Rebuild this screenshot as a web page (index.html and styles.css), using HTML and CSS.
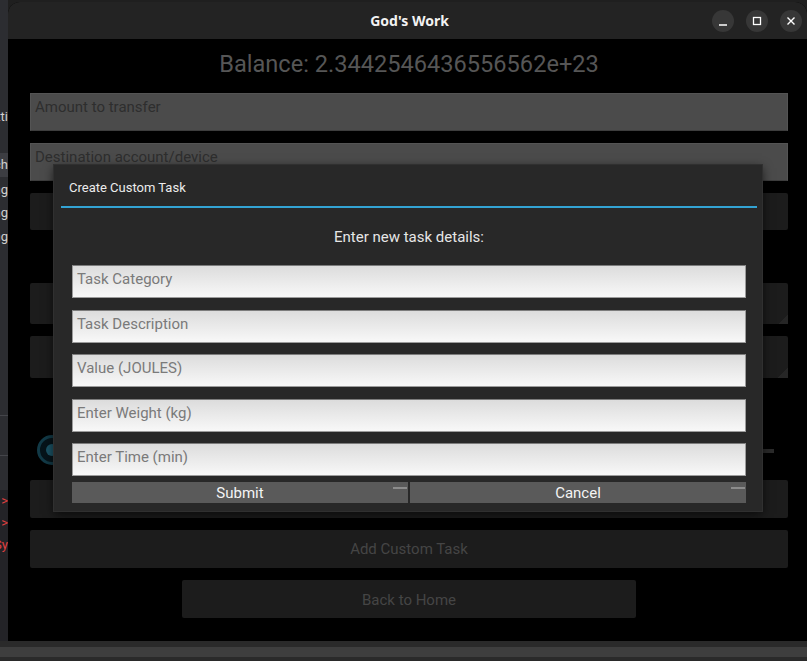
FILE: index.html
```html
<!DOCTYPE html>
<html lang="en">
<head>
	<meta charset="UTF-8">
	<title>God's Work</title>

	<link rel="stylesheet" href="styles.css">
</head>
<body>

	<!-- the app behind the window, only its right edge shows -->
	<div class="side">
		<div class="side-row r1"><span class="orange">t</span>ti</div>
		<div class="side-row r2">Search</div>
		<div class="side-row r3">String</div>
		<div class="side-row r4">String</div>
		<div class="side-row r5">String</div>
		<div class="side-sep s1"></div>
		<div class="side-sep s2"></div>
		<div class="side-low">
			<div class="side-row red">&gt;</div>
			<div class="side-row red">&gt;</div>
			<div class="side-row red">(Sy</div>
		</div>
	</div>

	<div class="window">
		<div class="titlebar">
			<div></div>
			<div class="title">God's Work</div>
			<div class="wbtns">
				<span class="wbtn">
					<svg width="22" height="22" viewBox="0 0 22 22"><path d="M7 15h8" stroke="#fff" stroke-width="1.5"/></svg>
				</span>
				<span class="wbtn">
					<svg width="22" height="22" viewBox="0 0 22 22"><rect x="7.5" y="7.5" width="7" height="7" fill="none" stroke="#fff" stroke-width="1.3"/></svg>
				</span>
				<span class="wbtn">
					<svg width="22" height="22" viewBox="0 0 22 22"><path d="M7.5 7.5l7 7M14.5 7.5l-7 7" stroke="#fff" stroke-width="1.4"/></svg>
				</span>
			</div>
		</div>

		<div class="content">
			<div class="balance">Balance: 2.3442546436556562e+23</div>
			<div class="field">Amount to transfer</div>
			<div class="field">Destination account/device</div>
			<div class="btn b1">Transfer</div>
			<div class="lbl"></div>
			<div class="btn b2 corner">Start Task</div>
			<div class="btn b3 corner">Stop Task</div>
			<div class="radio-row">
				<span class="radio"><span class="dot"></span></span>
				<span class="slider"></span>
			</div>
			<div class="btn">Submit Task</div>
			<div class="btn">Add Custom Task</div>
			<div class="btn home">Back to Home</div>
		</div>

		<!-- popup -->
		<div class="dialog">
			<div class="dlg-title">Create Custom Task</div>
			<div class="dlg-body">
				<div class="dlg-label">Enter new task details:</div>
				<div class="tinput">Task Category</div>
				<div class="tinput">Task Description</div>
				<div class="tinput">Value (JOULES)</div>
				<div class="tinput">Enter Weight (kg)</div>
				<div class="tinput">Enter Time (min)</div>
				<div class="dlg-btns">
					<div class="dbtn">Submit</div>
					<div class="dbtn">Cancel</div>
				</div>
			</div>
		</div>
	</div>

	<div class="bottom"></div>

</body>
</html>
```

FILE: styles.css
```css
*{
	margin: 0;
	padding: 0;
	box-sizing: border-box;
}

body{
	width: 807px;
	height: 661px;
	overflow: hidden;
	position: relative;
	background: #1f1f1f;
	font-family: Roboto, "Liberation Sans", sans-serif;
}

/* app behind */
.side{
	position: absolute;
	left: 0;
	top: 0;
	width: 8px;
	height: 661px;
	overflow: hidden;
	background: #2c2d31;
	font-size: 13px;
	color: #d0d0d0;
}

.side-row{
	position: absolute;
	right: 0;
	height: 22px;
	line-height: 22px;
	white-space: nowrap;
}

.side-row.r1{ top: 106px; }
.side-row.r2{ top: 153px; height: 24px; line-height: 24px; background: #3c3d42; padding-left: 40px; }
.side-row.r3{ top: 179px; }
.side-row.r4{ top: 202px; }
.side-row.r5{ top: 226px; }

.orange{
	color: #e0a060;
}

.side-sep{
	position: absolute;
	left: 0;
	width: 8px;
	height: 1px;
	background: #44454a;
}

.side-sep.s1{ top: 415px; }
.side-sep.s2{ top: 455px; }

.side-low{
	position: absolute;
	left: 0;
	top: 490px;
	width: 8px;
	height: 160px;
	background: #232327;
}

.side-low .side-row{
	position: static;
	display: flex;
	justify-content: flex-end;
	margin-top: 0;
}

.red{
	color: #e04040;
}

/* window */
.window{
	position: absolute;
	left: 8px;
	top: 2px;
	width: 799px;
	height: 639px;
	border-radius: 12px 12px 0 0;
	overflow: hidden;
	background: #000;
}

.titlebar{
	height: 37px;
	background: #232323;
	display: grid;
	grid-template-columns: 1fr auto 1fr;
	align-items: center;
}

.title{
	font-family: "Noto Sans", "DejaVu Sans", sans-serif;
	font-weight: bold;
	font-size: 14px;
	color: #f2f2f2;
	padding-left: 4px;
}

.wbtns{
	display: flex;
	justify-content: flex-end;
	gap: 12px;
	padding-right: 5px;
	padding-top: 1px;
}

.wbtn{
	width: 22px;
	height: 22px;
	border-radius: 50%;
	background: #373737;
	display: block;
}

.wbtn svg{
	display: block;
}

.content{
	padding: 0 19px 0 22px;
}

.balance{
	height: 54px;
	padding-top: 11px;
	line-height: 28px;
	font-size: 23.6px;
	color: #565656;
	text-align: center;
}

.field{
	height: 38px;
	margin-bottom: 12px;
	background: #4b4b4b;
	border: 1px solid #545454;
	border-bottom-color: #3d3d3d;
	padding: 3px 4px;
	line-height: 20px;
	font-size: 15px;
	color: #2e2e2e;
}

.btn{
	position: relative;
	height: 38px;
	line-height: 38px;
	margin-bottom: 12px;
	background: #1c1c1c;
	border-radius: 2px;
	text-align: center;
	font-size: 15px;
	color: #454545;
}

.btn.b1{
	height: 37px;
	margin-bottom: 0;
}

.lbl{
	height: 53px;
}

.btn.b2{
	height: 41px;
}

.btn.b3{
	height: 42px;
	margin-bottom: 0;
}

/* shaded corner of the kivy button */
.btn.corner::after{
	content: '';
	position: absolute;
	right: 0;
	bottom: 0;
	width: 10px;
	height: 10px;
	background: linear-gradient(135deg, transparent 50%, #262626 50%);
}

.btn.home{
	width: 454px;
	margin: 0 auto;
	line-height: 40px;
}

.radio-row{
	position: relative;
	height: 102px;
}

.radio{
	position: absolute;
	left: 7px;
	top: 57px;
	width: 30px;
	height: 30px;
	border-radius: 50%;
	border: 3px solid #123a47;
	background: #06141a;
}

.radio .dot{
	position: absolute;
	left: 6px;
	top: 6px;
	width: 12px;
	height: 12px;
	border-radius: 50%;
	background: #1b5466;
}

.slider{
	position: absolute;
	left: 732px;
	top: 71px;
	width: 12px;
	height: 4px;
	background: #2a2a2a;
}

/* dialog */
.dialog{
	position: absolute;
	left: 46px;
	top: 163px;
	width: 708px;
	height: 346px;
	background: #282828;
	box-shadow: 0 0 0 1px #303030, 0 3px 10px rgba(0,0,0,0.7);
}

.dlg-title{
	margin: 0 5px 0 7px;
	height: 43px;
	padding: 15px 0 0 8px;
	line-height: 16px;
	font-size: 13px;
	color: #ececec;
	border-bottom: 2px solid #33a3d3;
}

.dlg-body{
	padding: 0 16px 8px 18px;
}

.dlg-label{
	height: 57px;
	padding-top: 20px;
	line-height: 18px;
	font-size: 15px;
	color: #e6e6e6;
	text-align: center;
}

.tinput{
	height: 33px;
	margin-bottom: 11.5px;
	background: linear-gradient(#dcdcdc, #f8f8f8);
	border: 1px solid #9c9c9c;
	border-top-color: #7c7c7c;
	padding: 3px 4px;
	line-height: 20px;
	font-size: 15px;
	color: #7a7a7a;
}

.tinput:nth-child(6){
	margin-bottom: 6px;
}

.dlg-btns{
	display: flex;
	gap: 2px;
}

.dbtn{
	position: relative;
	flex: 1;
	height: 21px;
	line-height: 22px;
	background: #5a5a5a;
	text-align: center;
	font-size: 15px;
	color: #f4f4f4;
}

.dbtn::after{
	content: '';
	position: absolute;
	right: 1px;
	top: 5px;
	width: 14px;
	height: 2px;
	background: #8c8c8c;
}

.bottom{
	position: absolute;
	left: 0;
	right: 0;
	top: 641px;
	height: 20px;
	background: linear-gradient(#2a2a2a 0, #2a2a2a 6px, #3e3e3e 6px, #3e3e3e 16px, #2a2a2a 16px);
}
```
